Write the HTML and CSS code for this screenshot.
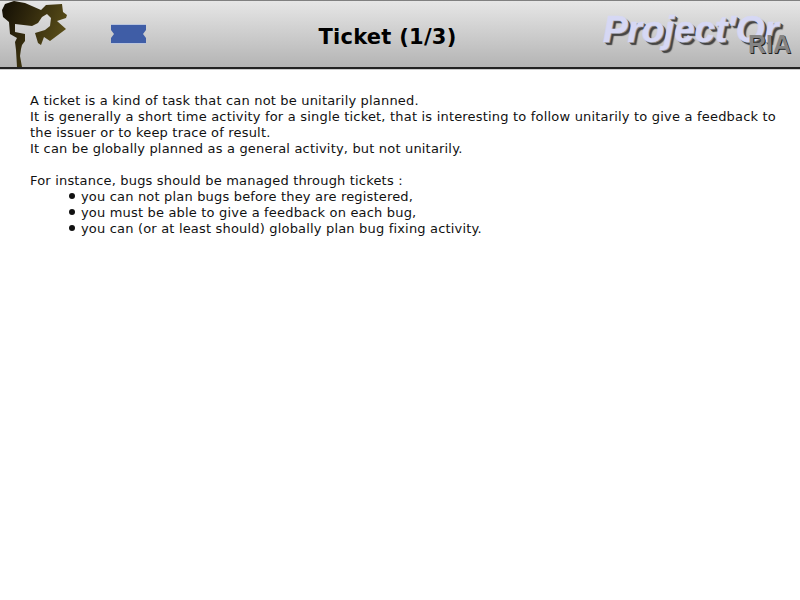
FILE: index.html
```html
<!DOCTYPE html>
<html lang="en">
<head>
<meta charset="utf-8">
<title>Ticket (1/3)</title>
<link rel="stylesheet" href="styles.css">
</head>
<body>
<header class="header">
  <svg class="lamp" width="70" height="68" viewBox="0 0 70 68" aria-hidden="true">
    <defs>
      <linearGradient id="lampFill" x1="0" y1="0" x2="1" y2="0.4">
        <stop offset="0" stop-color="#120e05"/>
        <stop offset="0.4" stop-color="#2e260c"/>
        <stop offset="1" stop-color="#5a4e18"/>
      </linearGradient>
    </defs>
    <path fill="url(#lampFill)" d="M2 10 L5 4 L14 1 L25 3 L41 10 L46 5 L62 4 L63 12 L67 15 L66 18 L57 21 L66 29 L50 41 L44 37 L41 45 L38 43 L35 33 L45 30 L50 26 L51 18 L47 14 L42 17 L38 23 L32 26 L15 24 L15 32 L25 34 L25 41 L22 45 L21 49 L20 56 L22 67 L17 67 L16 50 L15 42 L17 38 L10 34 L9 22 L3 17 Z"/>
  </svg>
  <svg class="ticket" width="35" height="20" viewBox="0 0 35 20" aria-hidden="true">
    <path class="ticket-body" d="M0 0 H35 V6 L32 10 L35 14 V20 H0 V14 L3 10 L0 6 Z"/>
    <path class="ticket-edge" d="M0 0.5 H35 M0 19.5 H35"/>
  </svg>
  <h1 class="title">Ticket (1/3)</h1>
  <div class="logo">
    <span class="logo-name">Project'Or</span>
    <span class="logo-ria">RIA</span>
  </div>
</header>
<main class="content">
  <p>A ticket is a kind of task that can not be unitarily planned.<br>
  It is generally a short time activity for a single ticket, that is interesting to follow unitarily to give a feedback to the issuer or to keep trace of result.<br>
  It can be globally planned as a general activity, but not unitarily.</p>
  <p class="intro">For instance, bugs should be managed through tickets :</p>
  <ul class="list">
    <li>you can not plan bugs before they are registered,</li>
    <li>you must be able to give a feedback on each bug,</li>
    <li>you can (or at least should) globally plan bug fixing activity.</li>
  </ul>
</main>
</body>
</html>
```
FILE: styles.css
```css
html, body {
  margin: 0;
  padding: 0;
  background: #fff;
}
body {
  width: 800px;
  height: 600px;
  overflow: hidden;
  font-family: "DejaVu Sans", Verdana, sans-serif;
  color: #111;
}
.header {
  box-sizing: border-box;
  height: 69px;
  display: grid;
  grid-template-columns: 70px 41px 36px 1fr 200px;
  align-items: start;
  background: linear-gradient(#e6e6e6, #b4b4b4);
  border-top: 1px solid #808080;
  border-bottom: 2px solid #222;
  box-shadow: 0 1px 0 #ccc;
}
.lamp {
  grid-column: 1;
  margin-top: -1px;
}
.ticket {
  grid-column: 3;
  margin-top: 23px;
}
.ticket-body {
  fill: #3f5da6;
}
.ticket-edge {
  fill: none;
  stroke: #b9c4dc;
  stroke-width: 1;
}
.title {
  grid-column: 4;
  margin: 23px 0 0;
  padding-left: 28px;
  text-align: center;
  font-size: 21px;
  line-height: 26px;
  font-weight: bold;
  letter-spacing: 0.25px;
  color: #000;
}
.logo {
  grid-column: 5;
  position: relative;
  padding: 8px 0 0 3px;
}
.logo-name {
  font-family: "Liberation Sans", Arial, sans-serif;
  font-size: 37px;
  line-height: 42px;
  font-weight: bold;
  font-style: italic;
  letter-spacing: -0.2px;
  white-space: nowrap;
  color: #d6d8f4;
  -webkit-text-stroke: 0.5px #d6d8f4;
  text-shadow: 1px 1px 0 #888, 2px 2px 0 #444, 3px 3px 1px #444;
}
.logo-ria {
  position: absolute;
  left: 148px;
  top: 29px;
  font-family: "Liberation Sans", Arial, sans-serif;
  font-size: 25px;
  line-height: 28px;
  font-weight: bold;
  color: #858585;
  text-shadow: 1px 1px 0 #222;
}
.content {
  padding: 24px 24px 0 30px;
  font-size: 13px;
  line-height: 16px;
  letter-spacing: 0.18px;
  text-align: justify;
}
.content p {
  margin: 0;
}
.intro {
  padding-top: 16px;
}
.list {
  margin: 0;
  padding: 0 0 0 39px;
  list-style: none;
}
.list li {
  display: flex;
  gap: 6px;
}
.list li::before {
  content: "";
  flex: none;
  width: 6px;
  height: 6px;
  margin-top: 4px;
  border-radius: 50%;
  background: #111;
}
```
